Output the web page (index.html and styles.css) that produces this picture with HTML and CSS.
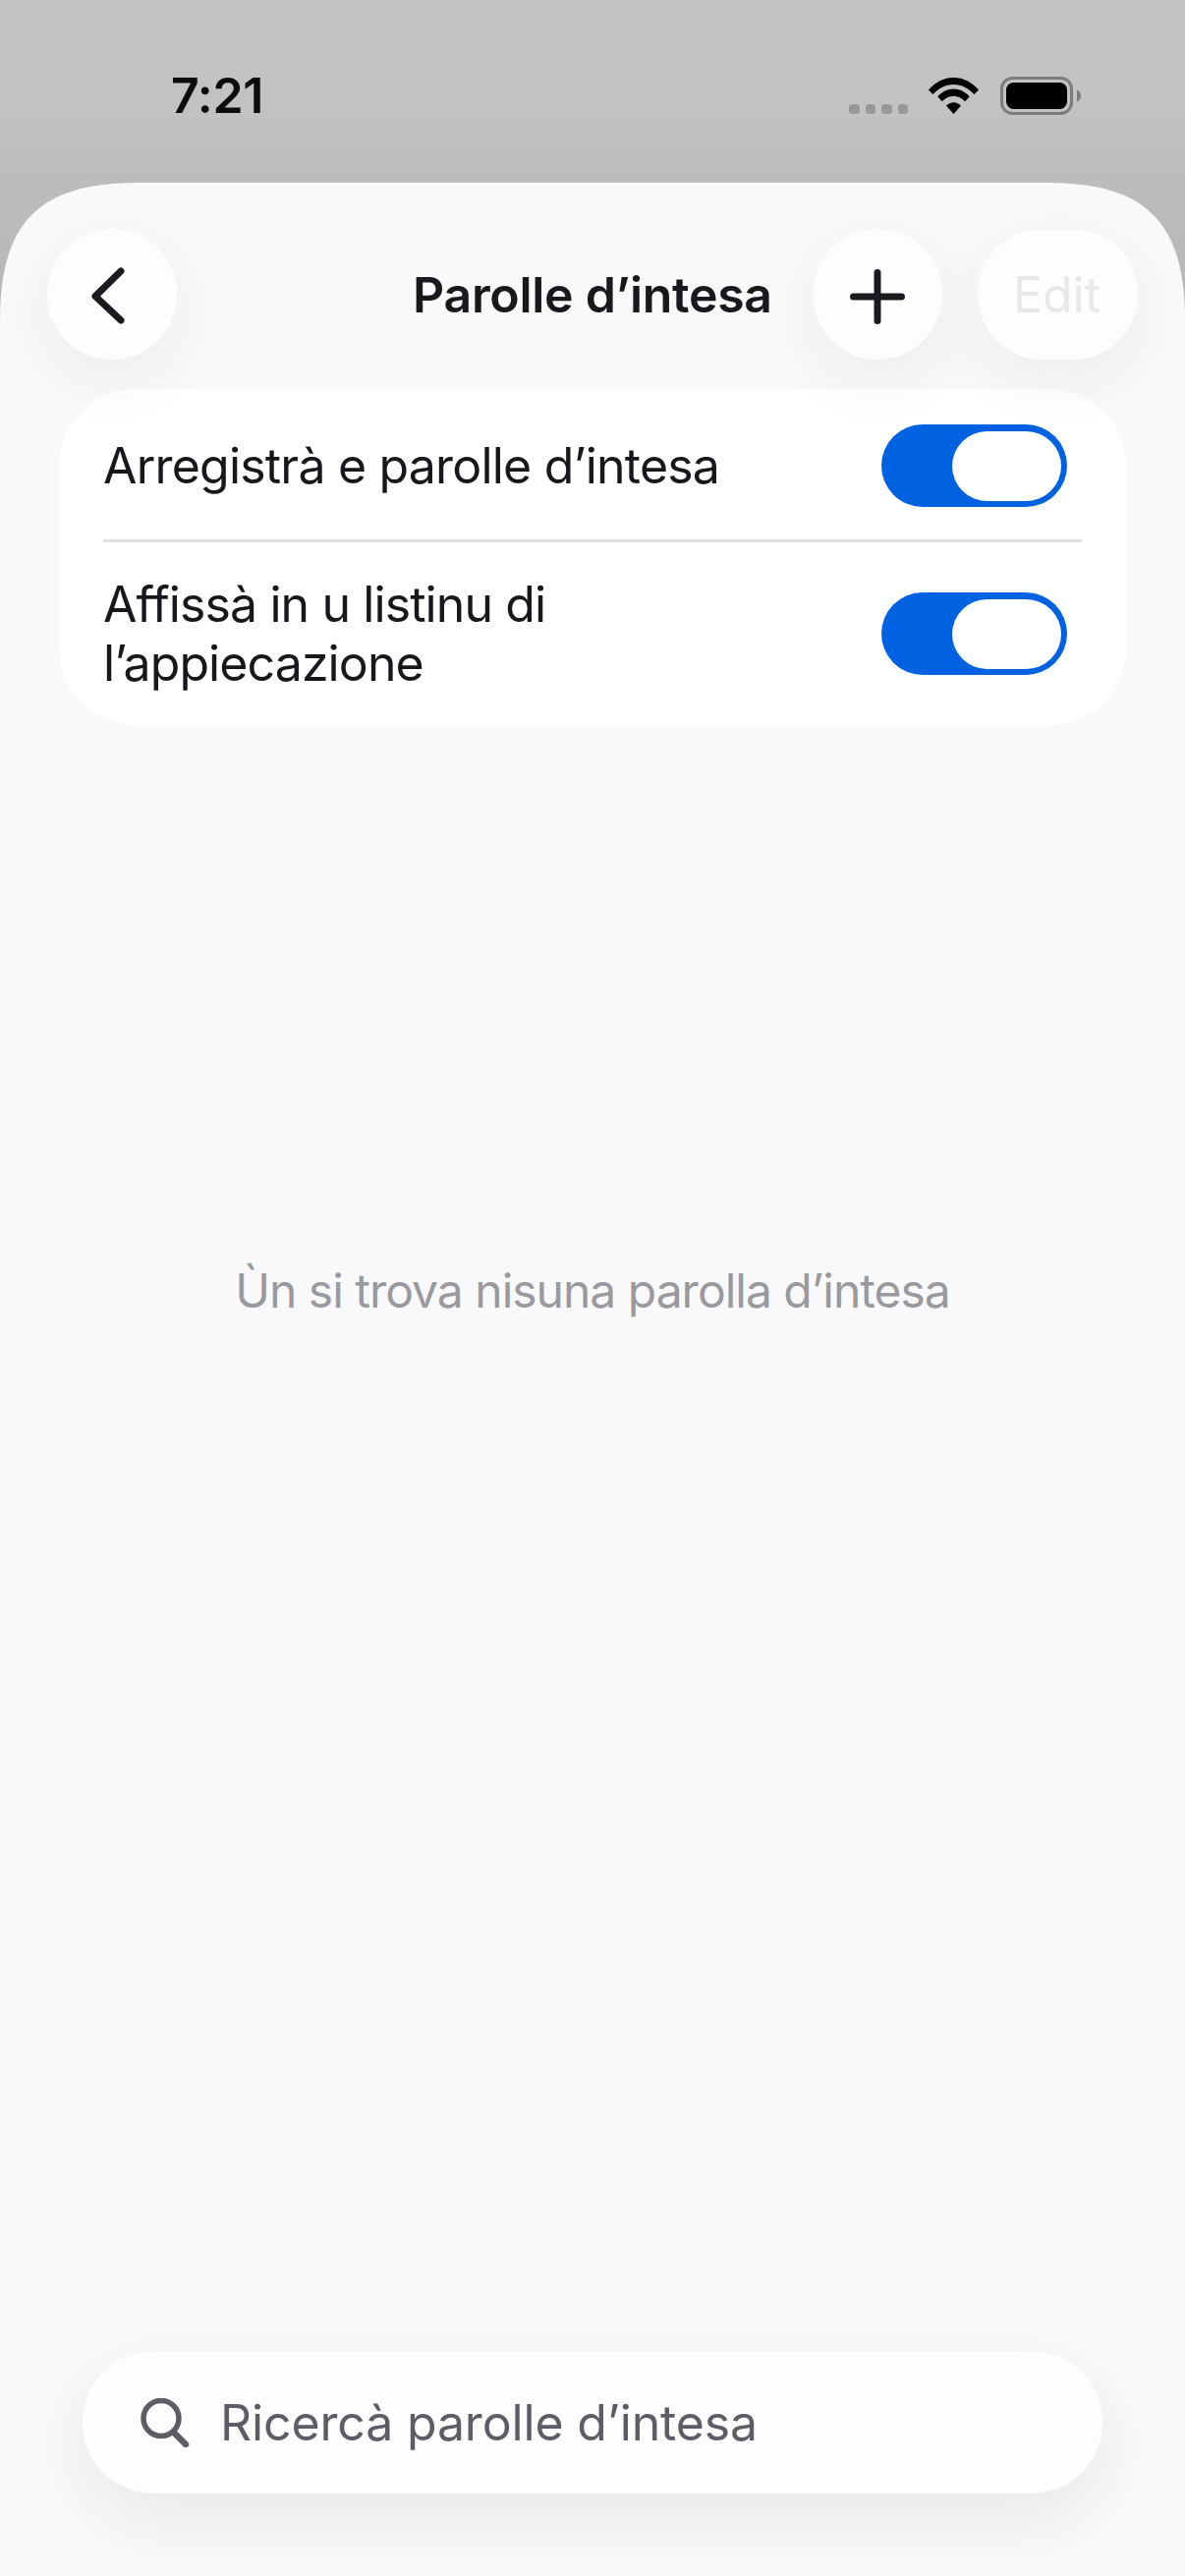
FILE: index.html
```html
<!DOCTYPE html>
<html lang="co">
<head>
<meta charset="utf-8">
<title>Parolle d’intesa</title>
<link rel="stylesheet" href="styles.css">
</head>
<body>
<div class="screen">
  <header class="status">
    <span class="time">7:21</span>
    <div class="status-icons">
      <div class="signal"><i></i><i></i><i></i><i></i></div>
      <svg class="wifi" width="51" height="37" viewBox="0 0 52 40" preserveAspectRatio="none"><path d="M0 13.500C6.800 5.200 15.800 0 26 0s19.200 5.200 26 13.500l-4.500 5C41.700 11.700 34.300 7.500 26 7.500S10.300 11.700 4.500 18.500z"/><path d="M9.500 21C14 15.500 19.600 12.500 26 12.500S38 15.500 42.500 21l-4.600 5.200C34.700 22.500 30.700 20.200 26 20.200s-8.700 2.300-11.900 6z"/><path d="M18.500 31C20.400 28.600 23 27.200 26 27.200S31.600 28.600 33.500 31L26 40z"/></svg>
      <svg class="battery" width="82" height="39" viewBox="0 0 82 39"><rect x="1.500" y="1.500" width="71" height="36" rx="11" fill="none" stroke="#7c7c7e" stroke-width="3"/><rect x="6" y="6" width="62" height="27" rx="7.500" fill="#000"/><path d="M78 13.500c2.500 .8 4 3 4 6s-1.500 5.200-4 6z" fill="#7c7c7e"/></svg>
    </div>
  </header>
  <main class="panel">
    <nav class="nav">
      <button class="round back" aria-label="Back"><svg width="36" height="60" viewBox="0 0 36 60"><path d="M32 5 6 30.500 32 55" fill="none" stroke="#1a1a1f" stroke-width="7" stroke-linecap="round" stroke-linejoin="round"/></svg></button>
      <h1 class="title">Parolle d’intesa</h1>
      <div class="nav-right">
        <button class="round add" aria-label="Add"><svg width="56" height="56" viewBox="0 0 56 56"><path d="M28 3.500v49M3.500 28h49" fill="none" stroke="#1a1a1f" stroke-width="7" stroke-linecap="round"/></svg></button>
        <button class="round edit">Edit</button>
      </div>
    </nav>
    <section class="card">
      <div class="row row-one">
        <span class="label">Arregistrà e parolle d’intesa</span>
        <span class="toggle"><span class="knob"></span></span>
      </div>
      <div class="sep"></div>
      <div class="row row-two">
        <span class="label label-tight">Affissà in u listinu di<br>l’appiecazione</span>
        <span class="toggle"><span class="knob"></span></span>
      </div>
    </section>
    <div class="empty">Ùn si trova nisuna parolla d’intesa</div>
    <div class="search-wrap">
      <div class="search">
        <svg width="50" height="50" viewBox="0 0 50 50"><circle cx="21" cy="20.500" r="18" fill="none" stroke="#5d5d66" stroke-width="5.500"/><path d="M35 36 46 47" fill="none" stroke="#5d5d66" stroke-width="6.500" stroke-linecap="round"/></svg>
        <span class="placeholder">Ricercà parolle d’intesa</span>
      </div>
    </div>
  </main>
</div>
</body>
</html>
```
FILE: styles.css
```css
* { box-sizing: border-box; }
html, body { margin: 0; padding: 0; }
body { width: 1206px; height: 2622px; overflow: hidden; font-family: Inter, "Noto Sans", sans-serif; background: #c0c0c2; }
.screen { width: 1206px; height: 2622px; display: flex; flex-direction: column; background: linear-gradient(#c3c3c5, #c2c2c4 110px, #bcbcbe 186px, #b8b8ba 300px); }
.status { height: 186px; flex: none; display: flex; justify-content: space-between; align-items: flex-start; padding: 67px 106px 0 174px; }
.time { font-size: 50px; line-height: 60px; font-weight: 600; color: #0c0c0e; letter-spacing: -0.3px; }
.status-icons { display: flex; align-items: flex-start; padding-top: 11px; }
.signal { display: flex; gap: 6px; margin-top: 28px; margin-right: 21px; }
.signal i { display: block; width: 10.500px; height: 10px; border-radius: 3.500px; background: #98989a; }
.wifi { margin-right: 22px; margin-top: 1px; }
.panel { flex: 1; display: flex; flex-direction: column; background: #f9f9fb; clip-path: path('M0 140C0 40 40 0 140 0H1066C1166 0 1206 40 1206 140V2436H0Z'); }
.nav { position: relative; z-index: 2; display: flex; align-items: center; height: 133px; margin-top: 47px; padding: 0 48px; flex: none; }
.round { width: 132px; height: 133px; border: 0; padding: 0; border-radius: 66px; background: #fdfdfe; box-shadow: 0 20px 70px rgba(0,0,0,.055); display: flex; align-items: center; justify-content: center; font-family: inherit; flex: none; }
.back svg { margin-left: -11px; margin-top: 2px; }
.add svg { margin-top: 4px; }
.title { margin: 0; flex: 1; padding-left: 240px; font-size: 50px; line-height: 60px; font-weight: 600; color: #18181d; letter-spacing: -0.3px; white-space: nowrap; }
.nav-right { display: flex; gap: 36px; }
.edit { width: 163px; font-size: 50px; font-weight: 400; color: #e8e8ea; padding-right: 2px; }
.card { margin: 30px 60px 0; background: #fff; border-radius: 78px; flex: none; padding: 0 45px; height: 342px; }
.row { display: flex; align-items: center; justify-content: space-between; padding-right: 15px; }
.row-one { height: 153px; padding-top: 3px; }
.row-two { height: 186px; }
.label { font-size: 50px; line-height: 60px; letter-spacing: -0.8px; color: #17171c; }
.label-tight { letter-spacing: -0.9px; }
.sep { height: 3px; background: #e0e0e6; }
.toggle { width: 189px; height: 84px; border-radius: 42px; background: #0062e1; display: flex; justify-content: flex-end; align-items: center; padding-right: 6px; flex: none; }
.knob { width: 111px; height: 71px; border-radius: 36px; background: #fff; }
.empty { flex: 1; display: flex; align-items: center; justify-content: center; padding-bottom: 504px; font-size: 48px; letter-spacing: -1px; color: #9a9a9e; }
.search-wrap { padding: 0 84px 84px 84px; flex: none; }
.search { height: 145px; border-radius: 72px; background: #fdfdfe; box-shadow: 0 24px 70px rgba(0,0,0,.07); display: flex; align-items: center; gap: 31px; padding: 0 59px; }
.placeholder { font-size: 50px; letter-spacing: -0.15px; color: #5d5d66; }
```
